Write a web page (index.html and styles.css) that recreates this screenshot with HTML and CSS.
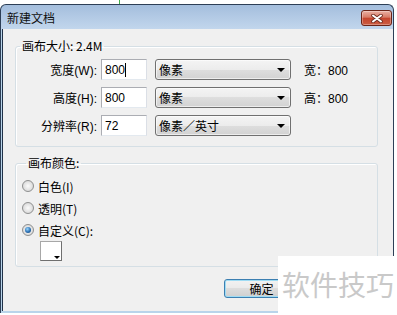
FILE: index.html
```html
<!DOCTYPE html>
<html lang="zh-CN">
<head>
    <meta charset="UTF-8">
    <title>新建文档</title>
    <link rel="stylesheet" href="styles.css">
</head>
<body>
    <div class="top-mark"></div>
    <div class="window">
        <div class="titlebar">
            <span class="title">新建文档</span>
            <button class="close-btn">
                <svg width="12" height="9" viewBox="0 0 12 9">
                    <path d="M2 1.5 L10 7.5 M10 1.5 L2 7.5" stroke="#6b2a1e" stroke-width="3.6" stroke-linecap="round"/>
                    <path d="M2 1.5 L10 7.5 M10 1.5 L2 7.5" stroke="#ffffff" stroke-width="2" stroke-linecap="round"/>
                </svg>
            </button>
        </div>
        <div class="content">
            <fieldset class="group size-group">
                <legend>画布大小: 2.4M</legend>
                <div class="field-row">
                    <span class="field-label">宽度(W):</span>
                    <div class="num-input">800<span class="caret"></span></div>
                    <div class="select"><span>像素</span><span class="arrow"></span></div>
                    <span class="info">宽：800</span>
                </div>
                <div class="field-row">
                    <span class="field-label">高度(H):</span>
                    <div class="num-input">800</div>
                    <div class="select"><span>像素</span><span class="arrow"></span></div>
                    <span class="info">高：800</span>
                </div>
                <div class="field-row">
                    <span class="field-label">分辨率(R):</span>
                    <div class="num-input">72</div>
                    <div class="select"><span>像素／英寸</span><span class="arrow"></span></div>
                </div>
            </fieldset>
            <fieldset class="group color-group">
                <legend>画布颜色:</legend>
                <div class="radio-row"><span class="radio"></span>白色(I)</div>
                <div class="radio-row"><span class="radio"></span>透明(T)</div>
                <div class="radio-row"><span class="radio checked"></span>自定义(C):</div>
                <div class="swatch"><span class="swatch-arrow"></span></div>
            </fieldset>
            <div class="button-row">
                <button class="dlg-btn default">确定</button>
                <!-- second button sits under the watermark -->
                <button class="dlg-btn"></button>
            </div>
        </div>
    </div>
    <div class="watermark">软件技巧</div>
</body>
</html>
```

FILE: styles.css
```css
body {
    margin: 0;
    background-color: #ffffff;
    font-family: "Liberation Sans", "Noto Sans CJK SC", sans-serif;
    font-size: 12px;
    color: #000;
    width: 397px;
    height: 315px;
    overflow: hidden;
}
.top-mark {
    margin-left: 119px;
    width: 1px;
    height: 4px;
    background-color: #3fae49;
}
.window {
    width: 394px;
    height: 309px;
    box-sizing: border-box;
    border: 1px solid #2d3f56;
    border-bottom: none;
    border-radius: 6px 6px 0 0;
    background: linear-gradient(#a4bedd, #c3d7ed 25px, #b9d4ea 25px);
    display: flex;
    flex-direction: column;
}
.titlebar {
    height: 24px;
    display: flex;
    align-items: center;
    justify-content: space-between;
    padding: 0 1px 0 6px;
}
.title {
    font-family: "Noto Sans CJK SC", sans-serif;
    font-size: 12px;
    color: #111;
    margin-top: 1px;
}
.close-btn {
    width: 31px;
    height: 16px;
    margin-top: 2px;
    padding: 0;
    border: 1px solid #6a2418;
    border-radius: 3px;
    background: linear-gradient(#eab0a3, #d77b66 45%, #c4452d 50%, #cc5d43);
    box-shadow: inset 0 0 0 1px rgba(255, 255, 255, 0.3);
    display: flex;
    align-items: center;
    justify-content: center;
}
.content {
    height: 282px;
    box-sizing: border-box;
    margin: 0 0 0 1px;
    border-left: 1px solid #1f3148;
    background-color: #f0f0f0;
    padding: 10px 15px 0 12px;
}
.group {
    margin: 0;
    border: 1px solid #d5dfe5;
    border-radius: 3px;
    box-shadow: inset 1px 1px 0 #fff;
}
.group legend {
    padding: 0 2px;
    margin-left: 4px;
    line-height: 14px;
    font-family: "Noto Sans CJK SC", sans-serif;
}
.size-group {
    padding: 6px 0 10px 0;
}
.field-row {
    display: flex;
    align-items: center;
    height: 21px;
    margin-bottom: 7px;
}
.field-row:last-child {
    margin-bottom: 0;
}
.field-label {
    width: 81px;
    text-align: right;
}
.num-input {
    width: 46px;
    height: 21px;
    box-sizing: border-box;
    margin-left: 4px;
    padding-left: 3px;
    background-color: #fff;
    border: 1px solid #abadb3;
    border-right-color: #dbdfe6;
    border-bottom-color: #e3e9ef;
    display: flex;
    align-items: center;
}
.caret {
    width: 1px;
    height: 14px;
    background-color: #000;
}
.select {
    width: 136px;
    height: 21px;
    box-sizing: border-box;
    margin-left: 8px;
    padding: 0 5px 0 3px;
    border: 1px solid #707070;
    border-radius: 3px;
    background: linear-gradient(#f4f4f4, #ececec 50%, #dedede 50%, #d2d2d2);
    box-shadow: inset 0 0 0 1px rgba(255, 255, 255, 0.6);
    display: flex;
    align-items: center;
    justify-content: space-between;
    font-family: "Noto Sans CJK SC", sans-serif;
}
.arrow {
    width: 0;
    height: 0;
    border-left: 4px solid transparent;
    border-right: 4px solid transparent;
    border-top: 4px solid #000;
}
.info {
    margin-left: 13px;
}
.color-group {
    margin-top: 9px;
    padding: 5px 0 5px 6px;
}
.radio-row {
    display: flex;
    align-items: center;
    height: 22px;
    font-family: "Noto Sans CJK SC", sans-serif;
}
.radio {
    width: 12px;
    height: 12px;
    box-sizing: border-box;
    margin-right: 4px;
    border-radius: 50%;
    border: 1px solid #8e8f8f;
    background: radial-gradient(circle at 50% 50%, #fbfbfb, #dcdcdc 70%, #c8c8c8);
    display: flex;
    align-items: center;
    justify-content: center;
}
.radio.checked::after {
    content: "";
    width: 6px;
    height: 6px;
    border-radius: 50%;
    background: radial-gradient(circle at 40% 35%, #9ad8ff, #2a6fb3 55%, #123e6e);
}
.swatch {
    width: 22px;
    height: 20px;
    box-sizing: border-box;
    margin-left: 18px;
    background-color: #fff;
    border: 1px solid #a7a7a7;
    border-right-color: #6f6f6f;
    border-bottom-color: #6f6f6f;
    display: flex;
    justify-content: flex-end;
    align-items: flex-end;
}
.swatch-arrow {
    width: 0;
    height: 0;
    margin: 0 1px 1px 0;
    border-left: 3px solid transparent;
    border-right: 3px solid transparent;
    border-top: 3px solid #000;
}
.button-row {
    display: flex;
    justify-content: flex-end;
    gap: 4px;
    margin-top: 12px;
}
.dlg-btn {
    width: 75px;
    height: 19px;
    padding: 0;
    border: 1px solid #707070;
    border-radius: 3px;
    background: linear-gradient(#f2f2f2, #ebebeb 45%, #dddddd 50%, #cfcfcf);
    font-family: "Noto Sans CJK SC", sans-serif;
    font-size: 12px;
    color: #000;
}
.dlg-btn.default {
    border-color: #3c7fb1;
    box-shadow: inset 0 0 0 1px #9fdcf4;
}
.watermark {
    position: absolute;
    left: 278px;
    top: 256px;
    width: 119px;
    height: 59px;
    box-sizing: border-box;
    padding: 14px 0 0 4px;
    background-color: #fff;
    color: #c9c9c9;
    font-family: "Noto Sans CJK SC", sans-serif;
    font-size: 28px;
    line-height: 28px;
    white-space: nowrap;
}
```
